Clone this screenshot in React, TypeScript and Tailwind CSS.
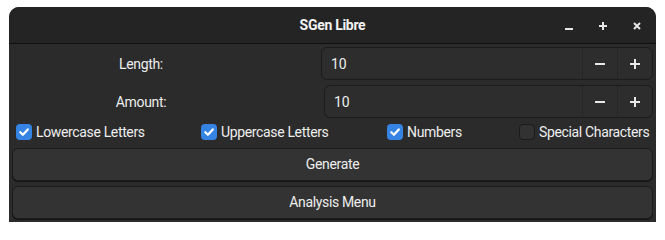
import React from "react";

const font = { fontFamily: "Roboto, 'Open Sans', sans-serif" };

function Check({ checked }: { checked: boolean }) {
  return checked ? (
    <span className="inline-flex h-4 w-4 shrink-0 items-center justify-center rounded-[4px] bg-[#3584e4]">
      <svg width="12" height="12" viewBox="0 0 12 12">
        <path d="M2.3 6.2 L4.9 8.8 L9.8 3.4" fill="none" stroke="#fff" strokeWidth="2.2" strokeLinecap="round" strokeLinejoin="round" />
      </svg>
    </span>
  ) : (
    <span className="inline-block h-4 w-4 shrink-0 rounded-[4px] border border-[#1b1b1b] bg-[#323232]" />
  );
}

function Option({ label, checked, className = "" }: { label: string; checked: boolean; className?: string }) {
  return (
    <label className={`flex items-center gap-1 ${className}`}>
      <Check checked={checked} />
      <span className="text-[14px] leading-none tracking-[-0.35px] text-[#eeeeee]">{label}</span>
    </label>
  );
}

function SpinRow({ label, width }: { label: string; width: string }) {
  return (
    <div className="flex h-[33px] items-center">
      <span className="w-[258px] pt-[1px] text-center text-[14px] tracking-[-0.35px] text-[#eeeeee]">{label}</span>
      <div className={`ml-auto flex h-full overflow-hidden rounded-[6px] border border-[#1c1c1c] bg-[#2d2d2d] ${width}`}>
        <span className="flex flex-1 items-center pl-[9px] pt-[1px] text-[14px] text-[#eeeeee]">10</span>
        <button type="button" className="flex w-[35px] items-center justify-center border-l border-[#262626]">
          <svg width="12" height="12" viewBox="0 0 12 12">
            <rect x="1" y="5" width="10" height="2" fill="#e8e8e8" />
          </svg>
        </button>
        <button type="button" className="flex w-[35px] items-center justify-center border-l border-[#262626]">
          <svg width="12" height="12" viewBox="0 0 12 12">
            <rect x="1" y="5" width="10" height="2" fill="#e8e8e8" />
            <rect x="5" y="1" width="2" height="10" fill="#e8e8e8" />
          </svg>
        </button>
      </div>
    </div>
  );
}

export default function App() {
  return (
    <div className="h-[232px] w-[665px] bg-white pl-[9px] pt-[7px]" style={font}>
      <div className="flex h-[215px] w-[647px] flex-col overflow-hidden rounded-t-[10px] bg-[#2b2b2b]">
        {/* Header bar */}
        <div className="relative flex h-[37px] shrink-0 items-center justify-center border-b border-[#101010] bg-[#242424]">
          <span className="text-[14px] font-bold tracking-[-0.3px] text-[#f2f2f2]">SGen Libre</span>
          <div className="absolute right-[15px] top-[15px] flex items-center gap-[26px]">
            <svg width="8" height="8" viewBox="0 0 8 8">
              <rect x="0" y="6" width="8" height="2" fill="#e6e6e6" />
            </svg>
            <svg width="8" height="8" viewBox="0 0 8 8">
              <rect x="0" y="3" width="8" height="2" fill="#e6e6e6" />
              <rect x="3" y="0" width="2" height="8" fill="#e6e6e6" />
            </svg>
            <svg width="8" height="8" viewBox="0 0 8 8">
              <path d="M1 1 L7 7 M7 1 L1 7" stroke="#e6e6e6" strokeWidth="2" />
            </svg>
          </div>
        </div>

        <div className="flex flex-col px-[3px] pt-[3px]">
          <SpinRow label="Length:" width="w-[332px]" />
          <div className="mt-[5px]">
            <SpinRow label="Amount:" width="w-[329px]" />
          </div>

          <div className="mt-[6px] flex h-[16px] items-center pl-[4px]">
            <Option label="Lowercase Letters" checked className="w-[185px]" />
            <Option label="Uppercase Letters" checked className="w-[186px]" />
            <Option label="Numbers" checked className="w-[132px]" />
            <Option label="Special Characters" checked={false} />
          </div>

          <button
            type="button"
            className="mt-[8px] h-[33px] w-full rounded-[6px] border border-[#1c1c1c] bg-[#333333] text-[14px] tracking-[-0.35px] text-[#eeeeee] shadow-[0_1px_0_#151515]"
          >
            Generate
          </button>
          <button
            type="button"
            className="mt-[5px] h-[33px] w-full rounded-[6px] border border-[#1c1c1c] bg-[#333333] text-[14px] tracking-[-0.35px] text-[#eeeeee] shadow-[0_1px_0_#151515]"
          >
            Analysis Menu
          </button>
        </div>
      </div>
    </div>
  );
}
